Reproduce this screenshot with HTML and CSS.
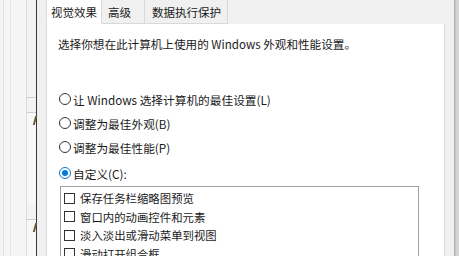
FILE: index.html
```html
<!DOCTYPE html>
<html lang="zh-CN">
<head>
<meta charset="utf-8">
<link rel="stylesheet" href="styles.css">
</head>
<body>
<div class="screen">
  <div class="bgwin">
    <div class="bg-col"></div>
    <div class="bg-side">
      <div class="bg-box b1"></div>
      <div class="bg-box b2"><span class="mark"></span></div>
      <div class="bg-box b3"><span class="mark"></span></div>
    </div>
  </div>
  <div class="dialog">
    <div class="tabs">
      <div class="tab active">视觉效果</div>
      <div class="tab">高级</div>
      <div class="tab">数据执行保护</div>
    </div>
    <div class="panel">
      <div class="desc">选择你想在此计算机上使用的 Windows 外观和性能设置。</div>
      <div class="radios">
        <div class="radio-row"><span class="radio"></span><span>让 Windows 选择计算机的最佳设置(L)</span></div>
        <div class="radio-row"><span class="radio"></span><span>调整为最佳外观(B)</span></div>
        <div class="radio-row"><span class="radio"></span><span>调整为最佳性能(P)</span></div>
        <div class="radio-row custom"><span class="radio checked"></span><span>自定义(C):</span></div>
      </div>
      <div class="list">
        <div class="check-row"><span class="box"></span><span>保存任务栏缩略图预览</span></div>
        <div class="check-row"><span class="box"></span><span>窗口内的动画控件和元素</span></div>
        <div class="check-row"><span class="box"></span><span>淡入淡出或滑动菜单到视图</span></div>
        <div class="check-row"><span class="box"></span><span>滑动打开组合框</span></div>
      </div>
    </div>
  </div>
  <div class="rightwin"></div>
</div>
</body>
</html>
```
FILE: styles.css
```css
html, body {
  margin: 0;
  padding: 0;
  width: 459px;
  height: 256px;
  overflow: hidden;
  background: #f0f0f0;
}
.screen {
  display: flex;
  width: 459px;
  height: 256px;
  overflow: hidden;
  font-family: "Noto Sans CJK SC", "Noto Sans", sans-serif;
  font-size: 11px;
  color: #1a1a1a;
}
.bgwin {
  width: 36px;
  flex: none;
  display: flex;
  background: linear-gradient(to right, #f4f4f4 0, #f4f4f4 3px, #e2e2e2 3px, #e2e2e2 4px, #f6f6f6 4px, #f6f6f6 10px, #e6e6e6 10px, #e6e6e6 11px, #f5f5f5 11px);
}
.bg-col {
  width: 26px;
  flex: none;
}
.bg-side {
  width: 10px;
  flex: none;
  display: flex;
  flex-direction: column;
  background: #f3f3f3;
  border-left: 1px solid #dcdcdc;
  box-sizing: border-box;
}
.bg-box {
  border-top: 1px solid #cfcfcf;
  position: relative;
}
.b1 { height: 16px; margin-top: 97px; }
.b2 { height: 99px; margin-top: 0; background: #f8f8f8; }
.b3 { height: 40px; margin-top: 16px; background: #f8f8f8; }
.mark {
  position: absolute;
  right: 0;
  top: 3px;
  width: 2px;
  height: 9px;
  background: #6b5a3a;
  transform: skewX(-15deg);
}
.dialog {
  width: 399px;
  flex: none;
  background: #f0f0f0;
  border-left: 1px solid #3a3a3a;
  border-right: 1px solid #b4b4b4;
  padding-left: 9px;
  padding-right: 9px;
  display: flex;
  flex-direction: column;
}
.tabs {
  display: flex;
  height: 24px;
  flex: none;
}
.tab {
  height: 24px;
  flex: none;
  white-space: nowrap;
  overflow: hidden;
  box-sizing: border-box;
  padding: 4px 0 0 6px;
  line-height: 16px;
  font-size: 11.5px;
  background: #f0f0f0;
  border-right: 1px solid #d9d9d9;
  border-bottom: 1px solid #d9d9d9;
}
.tab.active {
  background: #fff;
  border-left: 1px solid #d9d9d9;
  border-bottom-color: #fff;
  width: 56px;
  padding-left: 4px;
}
.tab:nth-child(2) { width: 43px; }
.tab:nth-child(3) { width: 83px; padding-left: 7px; }
.panel {
  flex: 1;
  background: #fff;
  border: 1px solid #d9d9d9;
  border-top: none;
  padding: 13px 12px 0 11px;
  display: flex;
  flex-direction: column;
}
.desc {
  height: 14px;
  line-height: 14px;
  font-size: 11.6px;
  white-space: nowrap;
}
.radios {
  margin-top: 36px;
  display: flex;
  flex-direction: column;
}
.radio-row {
  height: 24px;
  display: flex;
  align-items: center;
  gap: 2px;
  font-size: 11.7px;
  white-space: nowrap;
}
.radio-row.custom {
  margin-top: 2px;
  height: 24px;
}
.radio {
  width: 12px;
  height: 12px;
  box-sizing: border-box;
  border: 1px solid #333;
  border-radius: 50%;
  margin-left: 1px;
  display: flex;
  align-items: center;
  justify-content: center;
  flex: none;
}
.radio.checked {
  border-color: #0078d7;
}
.radio.checked::after {
  content: "";
  width: 6px;
  height: 6px;
  border-radius: 50%;
  background: #0078d7;
}
.list {
  margin: 1px 13px 0 2px;
  border: 1px solid #a0a0a0;
  border-bottom: none;
  padding: 2px 0 0 3px;
  flex: 1;
}
.check-row {
  height: 18.5px;
  display: flex;
  align-items: center;
  gap: 5px;
  font-size: 11.4px;
  white-space: nowrap;
}
.box {
  width: 11px;
  height: 11px;
  box-sizing: border-box;
  border: 1px solid #333;
  flex: none;
}
.rightwin {
  flex: 1;
  background: linear-gradient(to right, #c4c4c4 0, #c4c4c4 1px, #d2d2d2 1px, #dcdcdc 6px, #e8e8e8 10px, #eeeeee 11px, #eeeeee 15px, #dedede 15px, #dedede 16px, #f0f0f0 16px);
}
```
